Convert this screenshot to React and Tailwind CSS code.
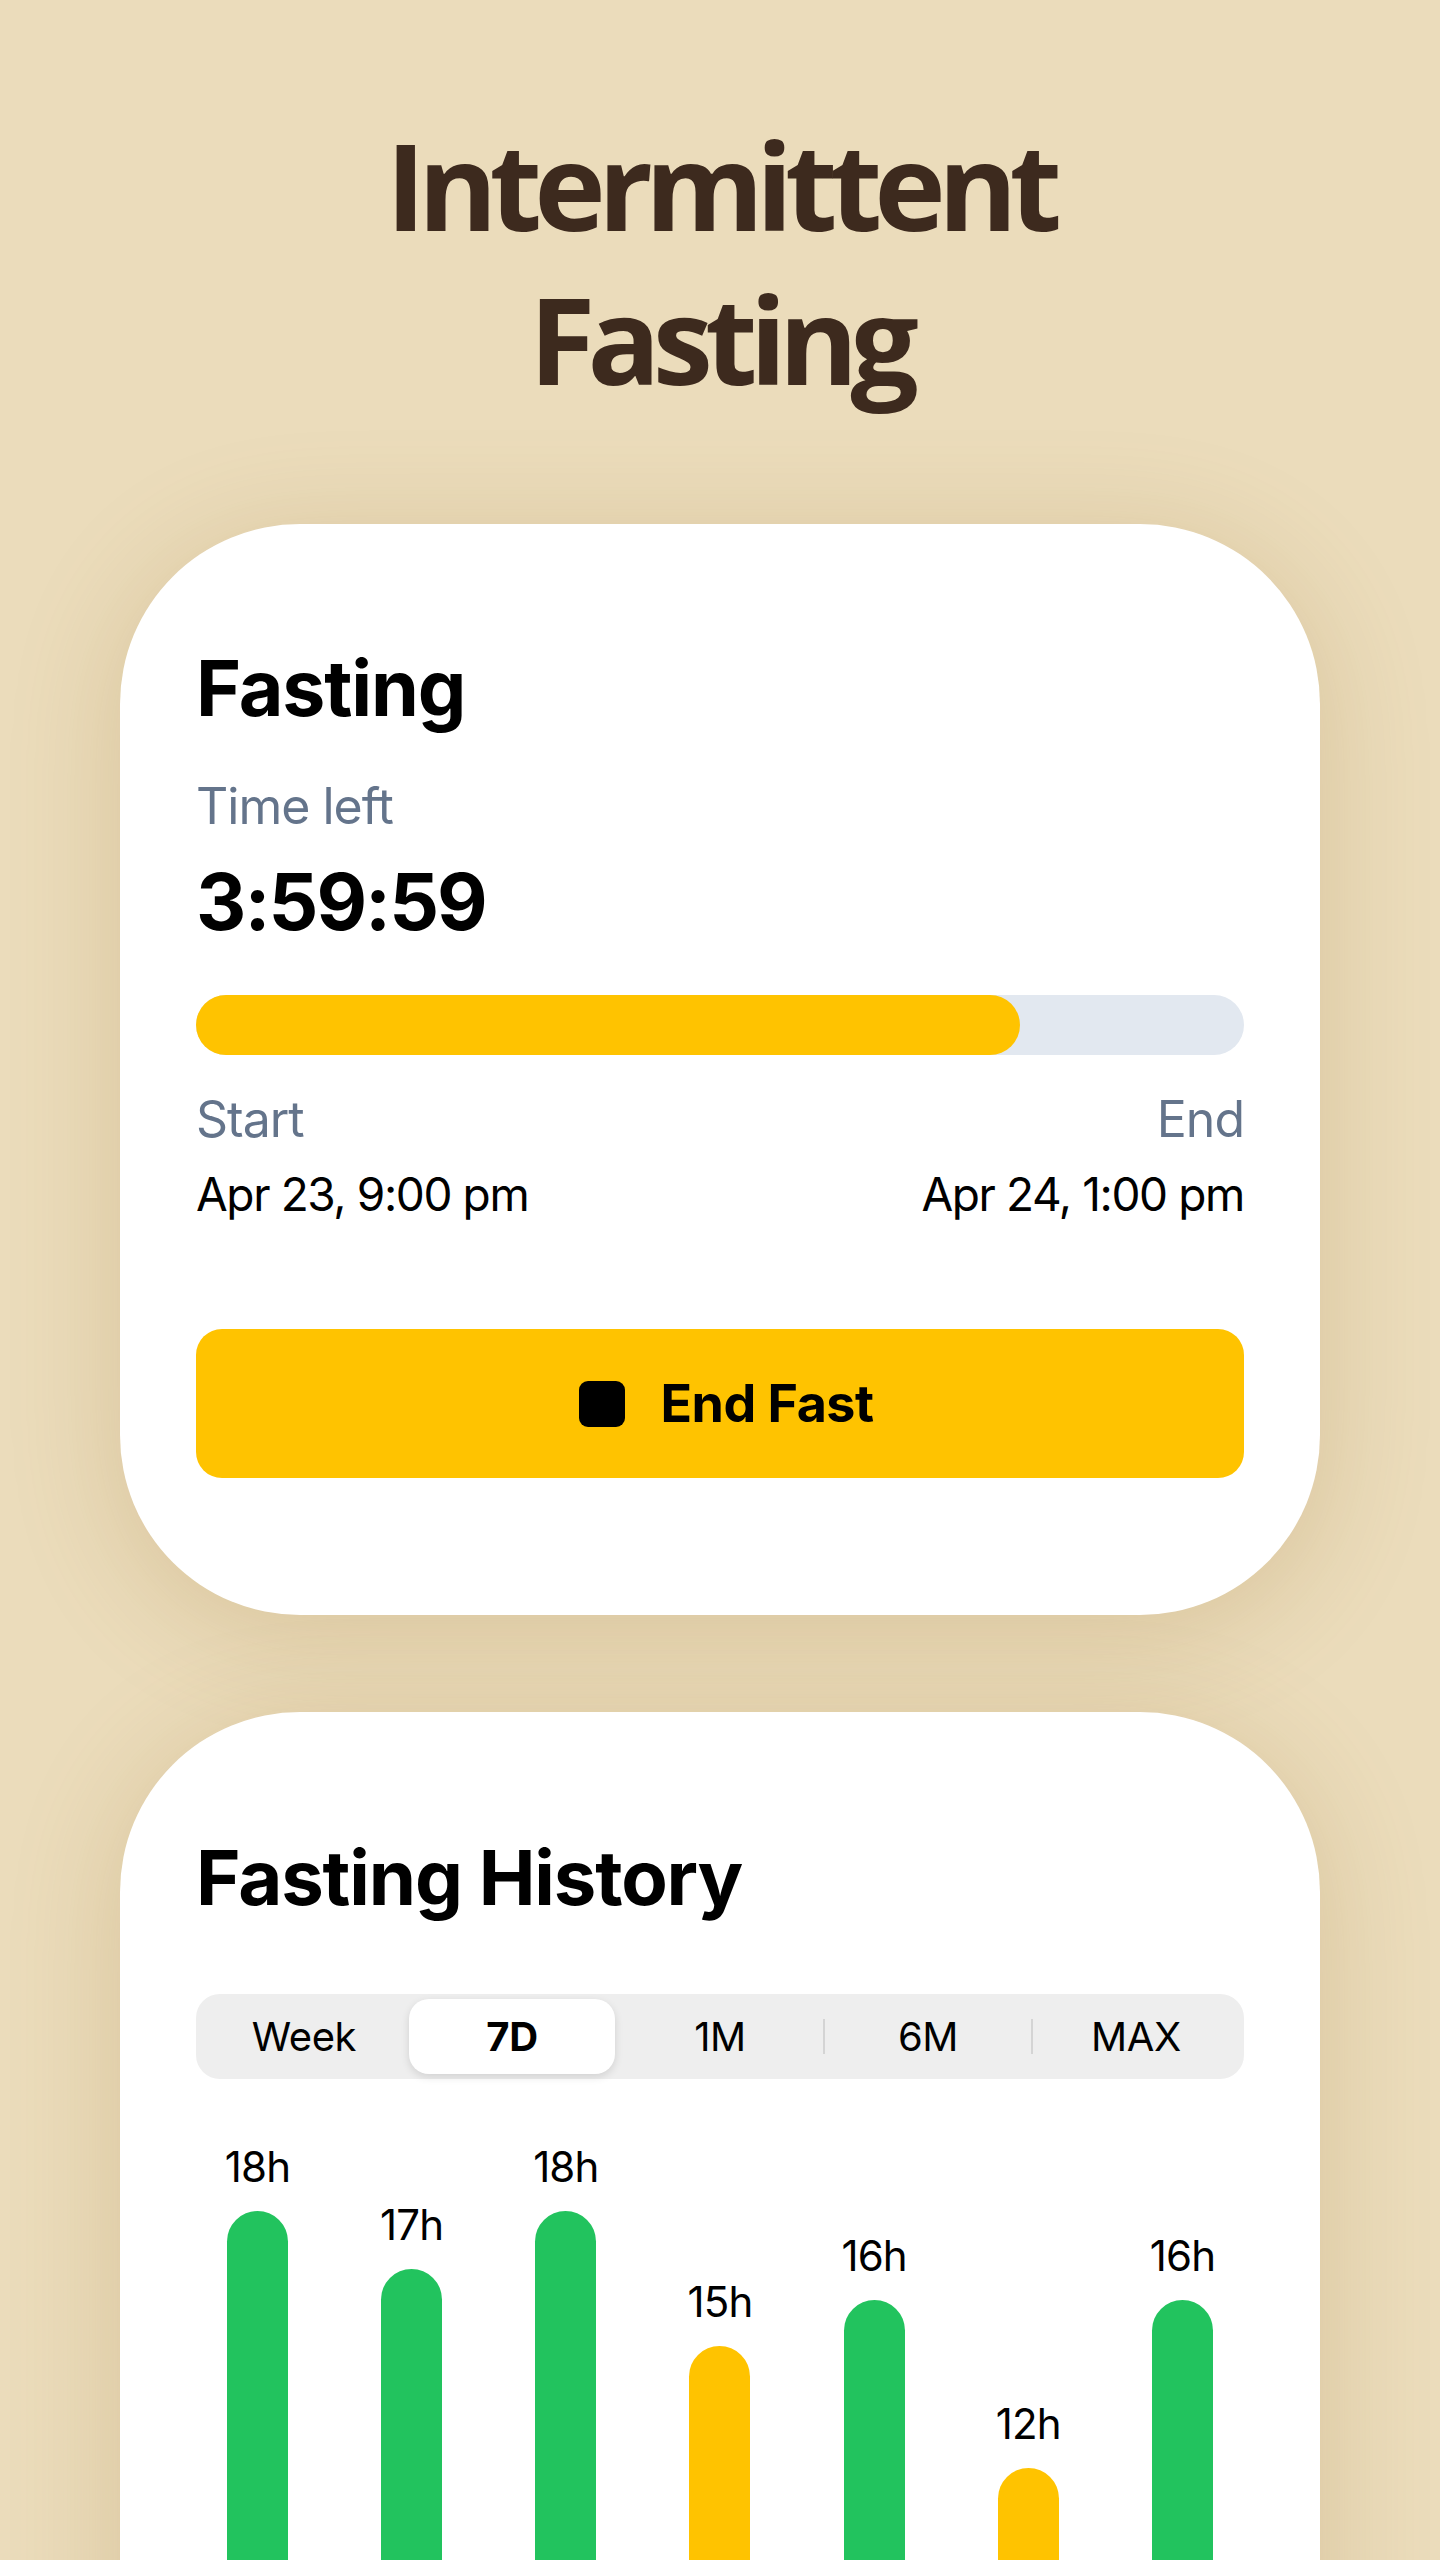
import React from "react";

const bars = [
  { label: "18h", h: 448, color: "bg-[#22c35e]" },
  { label: "17h", h: 390, color: "bg-[#22c35e]" },
  { label: "18h", h: 448, color: "bg-[#22c35e]" },
  { label: "15h", h: 313, color: "bg-[#ffc300]" },
  { label: "16h", h: 359, color: "bg-[#22c35e]" },
  { label: "12h", h: 191, color: "bg-[#ffc300]" },
  { label: "16h", h: 359, color: "bg-[#22c35e]" },
];

const ranges = ["Week", "7D", "1M", "6M", "MAX"];
const selected = 1;

// Carta bianca con angoli molto arrotondati
const Card = ({ className = "", children }) => (
  <div
    className={`w-[1200px] rounded-[180px] bg-white px-[76px] shadow-[0_16px_110px_rgba(150,110,40,0.22)] ${className}`}
  >
    {children}
  </div>
);

const App = () => {
  return (
    <div className="flex h-[2560px] flex-col items-center overflow-hidden bg-[#ebdcbb] font-['Inter','Liberation_Sans',sans-serif] text-black">
      <h1 className="pt-[107px] text-center font-['Open_Sans','Noto_Sans',sans-serif] text-[121px] font-bold leading-[154px] tracking-[-0.065em] text-[#3d2a1e]">
        Intermittent
        <br />
        Fasting
      </h1>

      {/* Digiuno in corso */}
      <Card className="mt-[109px] pt-[126px] pb-[137px]">
        <h2 className="text-[77px] font-bold leading-none tracking-[-0.015em]">Fasting</h2>

        <div className="mt-[54px] text-[50px] leading-none tracking-[-0.02em] text-[#64748b]">Time left</div>
        <div className="mt-[32px] text-[78px] font-bold leading-none tracking-[-0.025em]">3:59:59</div>

        <div className="mt-[54px] h-[60px] w-full rounded-full bg-[#e2e8f0]">
          <div className="h-full rounded-full bg-[#ffc300]" style={{ width: "78.6%" }} />
        </div>

        <div className="mt-[39px] flex justify-between text-[50px] leading-none tracking-[-0.02em] text-[#64748b]">
          <span>Start</span>
          <span>End</span>
        </div>
        <div className="mt-[27px] flex justify-between text-[46px] leading-none tracking-[-0.03em]">
          <span>Apr 23, 9:00 pm</span>
          <span>Apr 24, 1:00 pm</span>
        </div>

        <button className="mt-[112px] flex h-[149px] w-full items-center justify-center gap-[36px] rounded-[26px] bg-[#ffc300] pl-[12px]">
          <span className="h-[46px] w-[46px] rounded-[9px] bg-black" />
          <span className="text-[52px] font-bold leading-none tracking-[-0.01em]">End Fast</span>
        </button>
      </Card>

      {/* Storico */}
      <Card className="mt-[97px] pt-[127px] pb-[200px]">
        <h2 className="text-[76px] font-bold leading-none tracking-[-0.015em]">Fasting History</h2>

        <div className="mt-[79px] flex h-[85px] items-stretch rounded-[24px] bg-[#eeeeee] p-[5px]">
          {ranges.map((r, i) => (
            <React.Fragment key={r}>
              {i > 0 && (
                <div className="flex w-[2px] items-center">
                  <div
                    className={`h-[35px] w-[2px] ${
                      i === selected || i === selected + 1 ? "bg-transparent" : "bg-[#d4d4d4]"
                    }`}
                  />
                </div>
              )}
              <div
                className={`flex flex-1 items-center justify-center text-[40px] leading-none tracking-[-0.01em] ${
                  i === selected
                    ? "rounded-[20px] bg-white font-bold shadow-[0_3px_8px_rgba(0,0,0,0.12)]"
                    : ""
                }`}
              >
                {r}
              </div>
            </React.Fragment>
          ))}
        </div>

        <div className="mt-[67px] flex items-end justify-between px-[31px]">
          {bars.map((b, i) => (
            <div key={i} className="flex w-[61px] flex-col items-center">
              <span className="mb-[23px] whitespace-nowrap text-[42px] leading-none tracking-[-0.02em]">
                {b.label}
              </span>
              <div className={`w-[61px] rounded-t-full ${b.color}`} style={{ height: b.h }} />
            </div>
          ))}
        </div>
      </Card>
    </div>
  );
};

export default App;
